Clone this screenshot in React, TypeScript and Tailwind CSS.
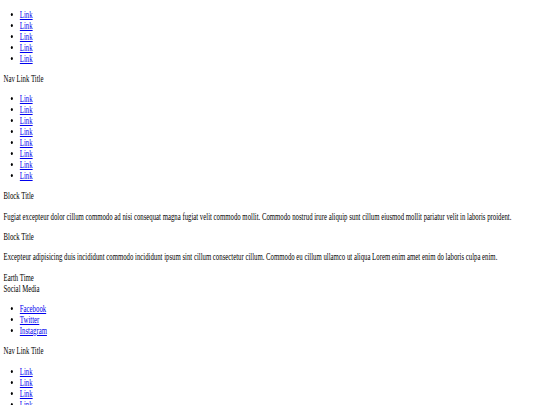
const linkCls = "text-[#0000ee] underline";

function LinkList({ items }: { items: string[] }) {
  return (
    <ul className="mb-[9.6px] list-disc pl-[24px]">
      {items.map((t, i) => (
        <li key={i}>
          <a href="#" className={linkCls}>
            {t}
          </a>
        </li>
      ))}
    </ul>
  );
}

export default function App() {
  return (
    <div className="h-[405px] w-[540px] overflow-hidden bg-white">
      <div className="w-[798px] origin-top-left scale-x-[0.677] px-[5.3px] pt-[10px] font-['Liberation_Serif',serif] text-[10px] leading-[10.87px] text-black">
        <LinkList items={["Link", "Link", "Link", "Link", "Link"]} />
        <p className="mb-[9.6px]">Nav Link Title</p>
        <LinkList items={["Link", "Link", "Link", "Link", "Link", "Link", "Link", "Link"]} />
        <p className="mb-[9.6px]">Block Title</p>
        <p className="mb-[9.6px]">
          Fugiat excepteur dolor cillum commodo ad nisi consequat magna fugiat velit commodo mollit. Commodo nostrud irure aliquip sunt cillum eiusmod mollit pariatur velit in laboris proident.
        </p>
        <p className="mb-[9.6px]">Block Title</p>
        <p className="mb-[9.6px]">
          Excepteur adipisicing duis incididunt commodo incididunt ipsum sint cillum consectetur cillum. Commodo eu cillum ullamco ut aliqua Lorem enim amet enim do laboris culpa enim.
        </p>
        <div>Earth Time</div>
        <div className="mb-[9.6px]">Social Media</div>
        <LinkList items={["Facebook", "Twitter", "Instagram"]} />
        <p className="mb-[9.6px]">Nav Link Title</p>
        <LinkList items={["Link", "Link", "Link", "Link", "Link"]} />
      </div>
    </div>
  );
}
